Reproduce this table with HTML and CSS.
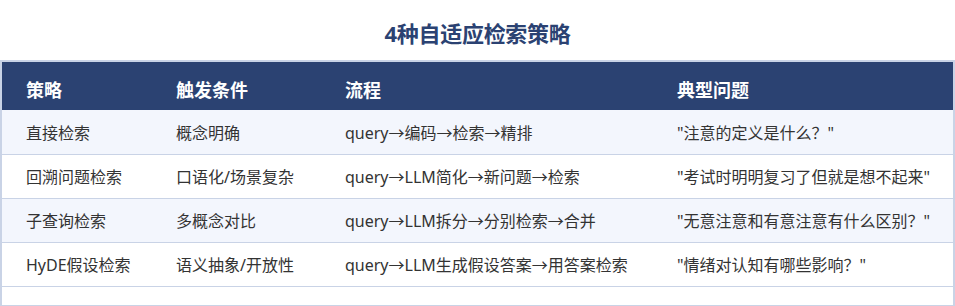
FILE: index.html
```html
<!DOCTYPE html>
<html lang="zh-CN">
<head>
<meta charset="utf-8">
<link rel="stylesheet" href="styles.css">
</head>
<body>
<h1 class="title">4种自适应检索策略</h1>
<div class="panel">
  <table class="grid">
    <colgroup>
      <col class="c1"><col class="c2"><col class="c3"><col class="c4">
    </colgroup>
    <thead>
      <tr><th>策略</th><th>触发条件</th><th>流程</th><th>典型问题</th></tr>
    </thead>
    <tbody>
      <tr class="odd"><td>直接检索</td><td>概念明确</td><td>query→编码→检索→精排</td><td>"注意的定义是什么？"</td></tr>
      <tr><td>回溯问题检索</td><td>口语化/场景复杂</td><td>query→LLM简化→新问题→检索</td><td>"考试时明明复习了但就是想不起来"</td></tr>
      <tr class="odd"><td>子查询检索</td><td>多概念对比</td><td>query→LLM拆分→分别检索→合并</td><td>"无意注意和有意注意有什么区别？"</td></tr>
      <tr><td>HyDE假设检索</td><td>语义抽象/开放性</td><td>query→LLM生成假设答案→用答案检索</td><td>"情绪对认知有哪些影响？"</td></tr>
    </tbody>
  </table>
</div>
</body>
</html>
```

FILE: styles.css
```css
html, body {
  margin: 0;
  padding: 0;
  background: #ffffff;
  font-family: "Noto Sans", "Noto Sans CJK SC", sans-serif;
}
.title {
  margin: 0;
  height: 60px;
  display: flex;
  align-items: center;
  justify-content: center;
  padding-top: 3px;
  box-sizing: border-box;
  font-size: 22px;
  font-weight: 700;
  color: #2b4272;
  letter-spacing: -0.3px;
}
.panel {
  border: 2px solid #c9d3e6;
  padding-bottom: 18px;
  background: #ffffff;
}
.grid {
  width: 100%;
  border-collapse: collapse;
  table-layout: fixed;
}
.c1 { width: 150px; }
.c2 { width: 169px; }
.c3 { width: 332px; }
.grid th {
  background: #2b4272;
  color: #ffffff;
  font-size: 18px;
  font-weight: 700;
  text-align: left;
  height: 48px;
  padding: 6px 0 0 24px;
  box-sizing: border-box;
}
.grid td {
  height: 44px;
  padding: 0 0 0 24px;
  font-size: 16px;
  color: #333333;
  border-bottom: 1px solid #c9d3e6;
  box-sizing: border-box;
  white-space: nowrap;
}
.grid tr.odd td {
  background: #f3f6fd;
}
```
